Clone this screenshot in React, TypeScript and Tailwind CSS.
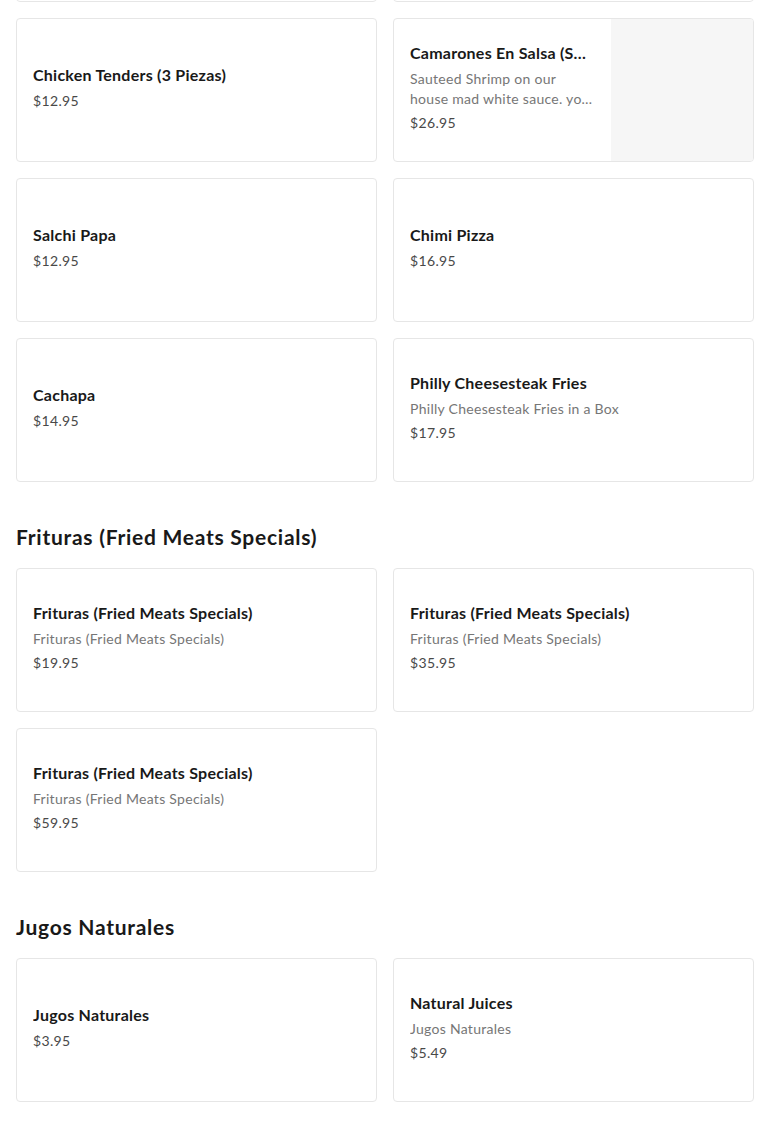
import React from 'react';

type Item = {
  name: string;
  description?: string;
  price: string;
  image?: boolean;
};

type Section = {
  title?: string;
  items: Item[];
};

const sections: Section[] = [
  {
    items: [
      { name: 'Chicken Tenders (3 Piezas)', price: '$12.95' },
      {
        name: 'Camarones En Salsa (Shrimp In Sauce)',
        description: 'Sauteed Shrimp on our house mad white sauce. your choice of side',
        price: '$26.95',
        image: true,
      },
      { name: 'Salchi Papa', price: '$12.95' },
      { name: 'Chimi Pizza', price: '$16.95' },
      { name: 'Cachapa', price: '$14.95' },
      {
        name: 'Philly Cheesesteak Fries',
        description: 'Philly Cheesesteak Fries in a Box',
        price: '$17.95',
      },
    ],
  },
  {
    title: 'Frituras (Fried Meats Specials)',
    items: [
      { name: 'Frituras (Fried Meats Specials)', description: 'Frituras (Fried Meats Specials)', price: '$19.95' },
      { name: 'Frituras (Fried Meats Specials)', description: 'Frituras (Fried Meats Specials)', price: '$35.95' },
      { name: 'Frituras (Fried Meats Specials)', description: 'Frituras (Fried Meats Specials)', price: '$59.95' },
    ],
  },
  {
    title: 'Jugos Naturales',
    items: [
      { name: 'Jugos Naturales', price: '$3.95' },
      { name: 'Natural Juices', description: 'Jugos Naturales', price: '$5.49' },
    ],
  },
];

const ItemCard: React.FC<{ item: Item }> = ({ item }) => (
  <div className="flex h-[144px] overflow-hidden rounded-[4px] border border-[#e6e6e6] bg-white">
    <div className="flex min-w-0 flex-1 flex-col justify-center gap-1 pb-[6px] pl-4 pr-4">
      <div className="truncate text-[16px] font-bold leading-6 tracking-[0.015em] text-[#191919]">
        {item.name}
      </div>
      {item.description && (
        <div className="line-clamp-2 max-h-10 overflow-hidden text-[14px] leading-5 tracking-[0.02em] text-[#767676]">
          {item.description}
        </div>
      )}
      <div className="text-[14px] leading-5 tracking-[0.025em] text-[#494949]">{item.price}</div>
    </div>
    {item.image && <div className="h-full w-[142px] shrink-0 bg-[#f6f6f6]" />}
  </div>
);

export default function App() {
  return (
    <div
      className="min-h-screen overflow-hidden bg-white px-4 pb-8"
      style={{ fontFamily: 'Lato, "Liberation Sans", sans-serif' }}
    >
      {/* bottom edge of the row scrolled above the viewport */}
      <div className="-mt-[142px] mb-4 grid grid-cols-2 gap-4">
        <div className="h-[144px] rounded-[4px] border border-[#e6e6e6]" />
        <div className="h-[144px] rounded-[4px] border border-[#e6e6e6]" />
      </div>
      {sections.map((section, i) => (
        <section key={i} className={i === 0 ? '' : 'mt-[41px]'}>
          {section.title && (
            <h2 className="mb-[17px] text-[21px] font-bold leading-7 tracking-[0.035em] text-[#191919]">
              {section.title}
            </h2>
          )}
          <div className="grid grid-cols-2 gap-4">
            {section.items.map((item, j) => (
              <ItemCard key={j} item={item} />
            ))}
          </div>
        </section>
      ))}
    </div>
  );
}
